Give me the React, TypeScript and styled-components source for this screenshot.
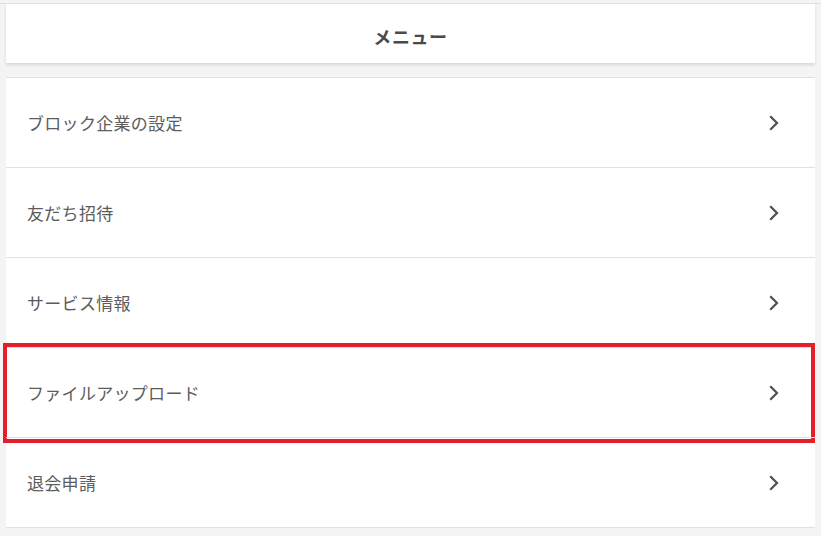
import React from "react";
import styled, { createGlobalStyle } from "styled-components";

const Global = createGlobalStyle`
  html, body { margin: 0; padding: 0; background: #f5f4f5; }
  body { font-family: "Noto Sans CJK JP", "Noto Sans", sans-serif; color: #555; }
`;

const Page = styled.div`
  display: flex;
  flex-direction: column;
  padding-top: 3px;
`;

const TopRule = styled.div`
  height: 1px;
  background: #e2e1e2;
`;

const Body = styled.div`
  display: flex;
  flex-direction: column;
  gap: 14px;
  padding: 0 6px;
`;

const Header = styled.header`
  height: 59px;
  box-sizing: border-box;
  padding-top: 5px;
  background: #fff;
  box-shadow: 0 2px 3px rgba(0, 0, 0, 0.12);
  display: flex;
  align-items: center;
  justify-content: center;
  font-size: 18px;
  font-weight: 700;
  color: #4a4a4a;
  letter-spacing: 0.6px;
`;

const List = styled.ul`
  list-style: none;
  margin: 0;
  padding: 0;
  background: #fff;
  border-top: 1px solid #e2e1e2;
  border-bottom: 1px solid #e2e1e2;
`;

const Row = styled.li<{ $highlight?: boolean }>`
  position: relative;
  height: 89px;
  display: flex;
  align-items: center;
  justify-content: space-between;
  padding: 0 34px 0 21px;
  font-size: 17px;
  letter-spacing: 0.3px;
  color: #5c5c5c;
  & + & { border-top: 1px solid #e2e1e2; }
  ${(p) =>
    p.$highlight &&
    `
    &::after {
      content: "";
      position: absolute;
      left: -3px;
      right: 0;
      top: -5px;
      bottom: -6px;
      border: 4px solid #e3202a;
      pointer-events: none;
    }
  `}
`;

const Chevron = () => (
  <svg width="14" height="16" viewBox="0 0 14 16" fill="none">
    <path d="M4 2 L10 8 L4 14" stroke="#4f4f4f" strokeWidth="2.2" strokeLinecap="square" />
  </svg>
);

const items = [
  "ブロック企業の設定",
  "友だち招待",
  "サービス情報",
  "ファイルアップロード",
  "退会申請",
];

export default function App() {
  return (
    <>
      <Global />
      <Page>
        <TopRule />
        <Body>
          <Header>メニュー</Header>
          <List>
            {items.map((t, i) => (
              <Row key={t} $highlight={i === 3}>
                <span>{t}</span>
                <Chevron />
              </Row>
            ))}
          </List>
        </Body>
      </Page>
    </>
  );
}
